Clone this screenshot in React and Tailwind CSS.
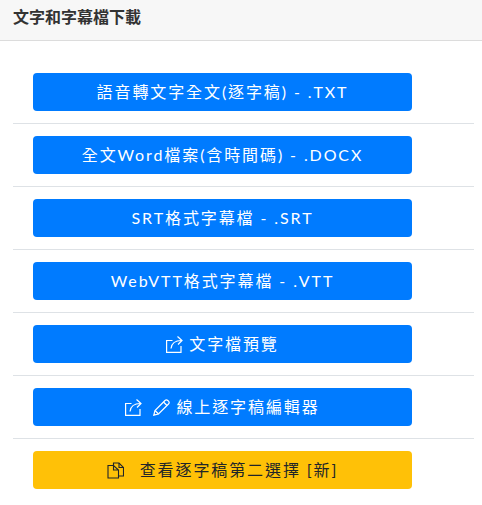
import React from 'react';

const ShareIcon = () => (
  <svg width="17" height="17" viewBox="0 0 17 17" fill="none" stroke="currentColor" strokeWidth="1.2" className="shrink-0">
    <path d="M6.5 4.5H.6V16.4H15V10" />
    <path d="M5 12.5C5.5 8 9 4.5 15.5 4.5" />
    <path d="M11.5 .5L16 4.5L12 8.5" />
  </svg>
);

const PencilIcon = () => (
  <svg width="17" height="17" viewBox="0 0 17 17" fill="none" stroke="currentColor" strokeWidth="1.2" className="shrink-0">
    <path d="M.8 16.2L2 11.5L12 1.5C12.8 .7 14 .7 14.8 1.5L15.5 2.2C16.3 3 16.3 4.2 15.5 5L5.5 15Z" />
    <path d="M10.5 3L14 6.5" />
    <path d="M2 11.5L5.5 15" />
  </svg>
);

const FilesIcon = () => (
  <svg width="17" height="17" viewBox="0 0 17 17" fill="none" stroke="currentColor" strokeWidth="1.1" className="shrink-0">
    <path d="M6.5 3.5H1V16H11.5V8L6.5 3.5V8H11.5" />
    <path d="M6.5 3.5V1H12L16.5 5.5V14H11.5" />
    <path d="M12 1V5.5H16.5" />
  </svg>
);

const BOTONES = [
  { texto: '語音轉文字全文(逐字稿) - .TXT' },
  { texto: '全文Word檔案(含時間碼) - .DOCX' },
  { texto: 'SRT格式字幕檔 - .SRT' },
  { texto: 'WebVTT格式字幕檔 - .VTT' },
  { texto: '文字檔預覽', iconos: [<ShareIcon key="s" />] },
  {
    texto: '線上逐字稿編輯器',
    iconos: [
      <span key="i" className="flex gap-[11px]">
        <ShareIcon />
        <PencilIcon />
      </span>,
    ],
  },
];

const App = () => {
  return (
    <div className="w-[482px] h-[505px] overflow-hidden bg-white text-white font-['Lato','Noto_Sans_CJK_TC',sans-serif]">
      <div className="h-[41px] bg-[#f7f7f7] border-b border-[#dcdcdc] pl-[13px] pt-[5px]">
        <h1 className="text-base leading-[24px] font-bold text-[#333]">文字和字幕檔下載</h1>
      </div>

      <div className="pt-[32px] pl-[13px] pr-2">
        {BOTONES.map(boton => (
          <div key={boton.texto} className="pb-3 mb-3 border-b border-[#dee2e6]">
            <button className="ml-5 w-[379px] h-[38px] rounded bg-[#007bff] flex items-center justify-center gap-[6px] text-base tracking-[1.9px]">
              {boton.iconos}
              <span>{boton.texto}</span>
            </button>
          </div>
        ))}
        <button className="ml-5 w-[379px] h-[38px] rounded bg-[#ffc107] text-[#212529] flex items-center justify-center gap-[16px] text-base tracking-[1.9px]">
          <FilesIcon />
          <span>查看逐字稿第二選擇 [新]</span>
        </button>
      </div>
    </div>
  );
};

export default App;
